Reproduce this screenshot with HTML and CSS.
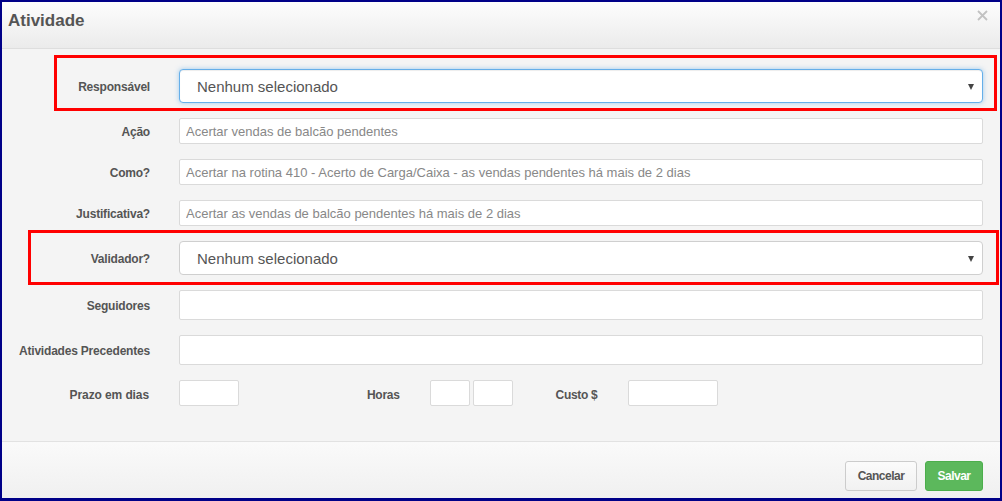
FILE: index.html
```html
<!DOCTYPE html>
<html lang="pt">
<head>
<meta charset="utf-8">
<title>Atividade</title>
<link rel="stylesheet" href="styles.css">
</head>
<body>
<div class="frame">
  <div class="modal-header">
    <h4 class="title">Atividade</h4>
    <span class="close" aria-label="Fechar">
      <svg width="11" height="11" viewBox="0 0 11 11"><path d="M1 1L10 10M10 1L1 10" stroke="#c2c2c2" stroke-width="1.8" fill="none"/></svg>
    </span>
  </div>
  <div class="modal-body">
    <div class="row">
      <label class="lbl">Responsável</label>
      <div class="select focus"><span>Nenhum selecionado</span><i class="caret"></i></div>
    </div>
    <div class="row">
      <label class="lbl">Ação</label>
      <input class="ctl" type="text" value="Acertar vendas de balcão pendentes">
    </div>
    <div class="row">
      <label class="lbl">Como?</label>
      <input class="ctl" type="text" value="Acertar na rotina 410 - Acerto de Carga/Caixa - as vendas pendentes há mais de 2 dias">
    </div>
    <div class="row">
      <label class="lbl">Justificativa?</label>
      <input class="ctl" type="text" value="Acertar as vendas de balcão pendentes há mais de 2 dias">
    </div>
    <div class="row">
      <label class="lbl">Validador?</label>
      <div class="select"><span>Nenhum selecionado</span><i class="caret"></i></div>
    </div>
    <div class="row">
      <label class="lbl">Seguidores</label>
      <input class="ctl tall" type="text">
    </div>
    <div class="row">
      <label class="lbl">Atividades Precedentes</label>
      <input class="ctl tall" type="text">
    </div>
    <div class="row">
      <label class="lbl narrow">Prazo em dias</label>
      <input class="ctl w60" type="text">
      <label class="lbl-inline horas">Horas</label>
      <input class="ctl w40" type="text">
      <input class="ctl w40 sep" type="text">
      <label class="lbl-inline custo">Custo $</label>
      <input class="ctl w90" type="text">
    </div>
  </div>
  <div class="modal-footer">
    <button class="btn btn-default">Cancelar</button>
    <button class="btn btn-success">Salvar</button>
  </div>
  <div class="mark mark-1"></div>
  <div class="mark mark-2"></div>
</div>
</body>
</html>
```
FILE: styles.css
```css
* { box-sizing: border-box; }
html, body { margin: 0; padding: 0; }
body {
  width: 1002px;
  height: 501px;
  font-family: "Liberation Sans", Arial, sans-serif;
  color: #555;
  overflow: hidden;
}
.frame {
  position: relative;
  width: 1002px;
  height: 501px;
  border-style: solid;
  border-color: #000088;
  border-width: 2px 2px 3px 2px;
  display: flex;
  flex-direction: column;
  background: #f4f4f4;
}
.modal-header {
  height: 47px;
  flex: none;
  display: flex;
  justify-content: space-between;
  align-items: flex-start;
  padding: 9px 12px 0 6px;
  background: linear-gradient(to bottom, #fdfdfd 0%, #ebebeb 100%);
  border-bottom: 1px solid #dedede;
}
.title {
  margin: 0;
  font-size: 17px;
  line-height: 20px;
  font-weight: bold;
  color: #555;
}
.close {
  display: block;
  margin-top: -1px;
  line-height: 0;
}
.modal-body {
  flex: 1;
  display: flex;
  flex-direction: column;
  gap: 15px;
  padding: 20px 17px 0 0;
  background: #f4f4f4;
}
.row {
  display: flex;
  align-items: center;
}
.lbl {
  flex: none;
  width: 148px;
  text-align: right;
  font-size: 12px;
  font-weight: bold;
  color: #555;
  margin-right: 29px;
  letter-spacing: -0.2px;
  padding-top: 1px;
}
.lbl.narrow { letter-spacing: -0.1px; padding-top: 3px; margin-right: 29px; width: 147px; }
.lbl-inline {
  font-size: 12px;
  font-weight: bold;
  color: #555;
  letter-spacing: -0.3px;
  padding-top: 3px;
}
.horas { margin-left: 128px; margin-right: 30px; }
.custo { margin-left: 43px; margin-right: 31px; }
.ctl {
  flex: 1;
  height: 26px;
  border: 1px solid #dadada;
  border-radius: 2px;
  background: #fff;
  padding: 0 6px;
  font-family: "Liberation Sans", Arial, sans-serif;
  font-size: 13px;
  color: #888;
  outline: none;
  margin: 0;
}
.ctl.tall { height: 30px; }
.ctl.w60 { flex: none; width: 60px; margin-left: 1px; }
.ctl.w40 { flex: none; width: 40px; }
.ctl.w90 { flex: none; width: 90px; }
.ctl.sep { margin-left: 3px; }
.select {
  flex: 1;
  height: 34px;
  border: 1px solid #cfcfcf;
  border-radius: 4px;
  background: #fff;
  display: flex;
  align-items: center;
  justify-content: space-between;
  padding: 0 8px 0 17px;
  font-size: 15px;
  color: #555;
}
.select.focus {
  border-color: #66afe9;
  box-shadow: inset 0 1px 1px rgba(0,0,0,.075), 0 0 5px rgba(102,175,233,.6);
}
.caret {
  width: 0;
  height: 0;
  border-left: 3.5px solid transparent;
  border-right: 3.5px solid transparent;
  border-top: 6px solid #444;
  margin-top: 1px;
}
.modal-footer {
  flex: none;
  height: 57px;
  border-top: 1px solid #e2e2e2;
  background: linear-gradient(to bottom, #fafafa 0%, #f0f0f0 100%);
  display: flex;
  justify-content: flex-end;
  align-items: flex-start;
  gap: 8px;
  padding: 19px 17px 0 0;
}
.btn {
  height: 30px;
  border-radius: 3px;
  font-family: "Liberation Sans", Arial, sans-serif;
  font-size: 12px;
  font-weight: bold;
  letter-spacing: -0.5px;
  padding: 0;
  cursor: pointer;
}
.btn-default {
  width: 72px;
  background: linear-gradient(to bottom, #fbfbfb, #f1f1f1);
  border: 1px solid #ccc;
  color: #555;
}
.btn-success {
  width: 58px;
  background: #5cb85c;
  border: 1px solid #4cae4c;
  color: #fff;
}
.mark {
  position: absolute;
  border: 3px solid #ff0000;
  pointer-events: none;
}
.mark-1 { left: 52px; top: 53px; width: 943px; height: 56px; }
.mark-2 { left: 26px; top: 228px; width: 971px; height: 55px; }
```
